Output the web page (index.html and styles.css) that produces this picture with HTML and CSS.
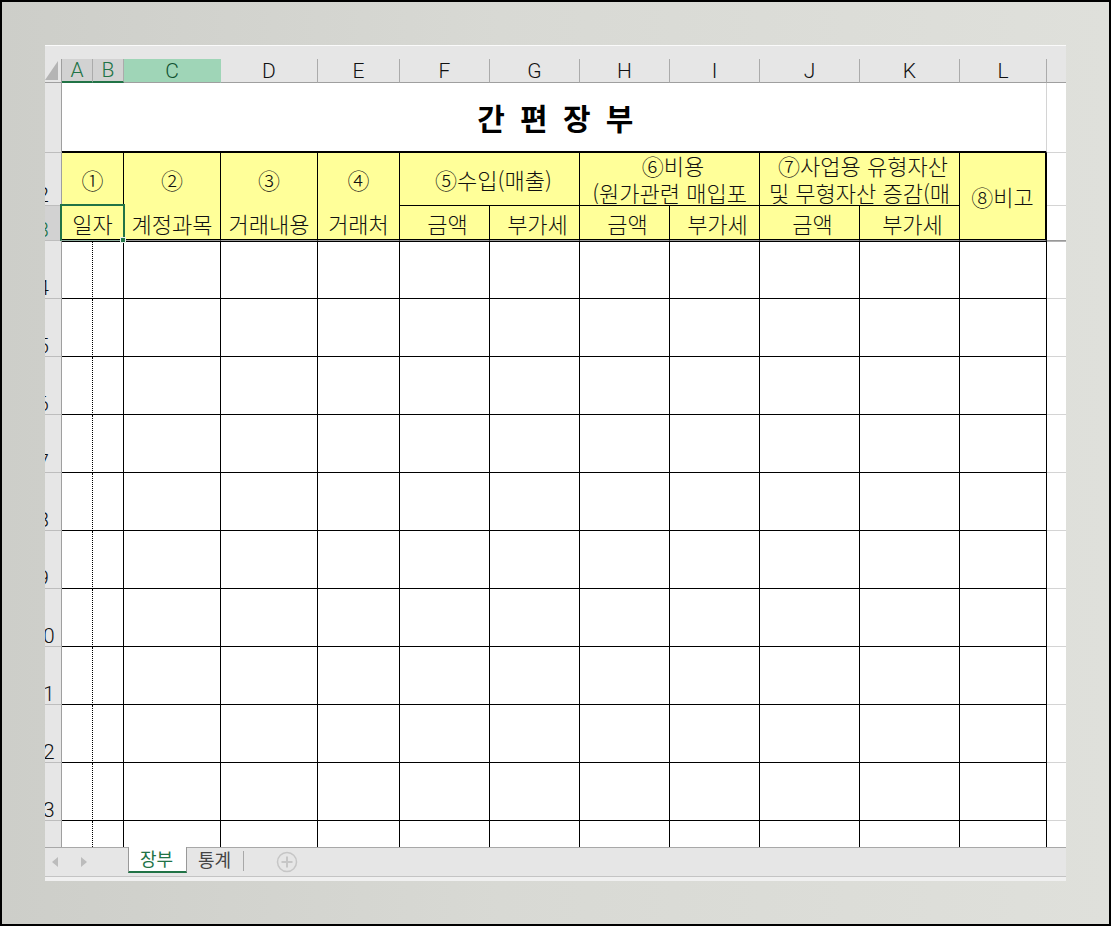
FILE: index.html

```html
<!DOCTYPE html>
<html lang="ko">
<head>
    <meta charset="UTF-8">
    <title>간편장부</title>
    <link rel="stylesheet" href="styles.css">
</head>
<body>
    <div class="frame">
        <div class="window">
            <div class="top-strip"></div>
            <div class="sheet">
                <table>
                    <colgroup>
                        <col class="w17"><col class="w31"><col class="w31"><col class="w97"><col class="w97"><col class="w82">
                        <col class="w90"><col class="w90"><col class="w90"><col class="w90">
                        <col class="w100"><col class="w100"><col class="w87"><col class="w19">
                    </colgroup>
                    <thead>
                        <tr class="letters">
                            <th class="corner"><svg width="13" height="19" viewBox="0 0 13 19"><polygon points="13,0 13,19 0,19" fill="#b4b4b4"/></svg></th>
                            <th class="sel-col">A</th><th class="sel-col">B</th><th class="cur-col">C</th>
                            <th>D</th><th>E</th><th>F</th><th>G</th><th>H</th><th>I</th><th>J</th><th>K</th><th>L</th><th class="no-sep"></th>
                        </tr>
                    </thead>
                    <tbody>
                        <tr class="r-title">
                            <th class="num"></th>
                            <td colspan="12" class="title">간 편 장 부</td>
                            <td class="out"></td>
                        </tr>
                        <tr class="r-head1">
                            <th class="num"><span>2</span></th>
                            <td colspan="2" class="y open">①</td>
                            <td class="y open">②</td>
                            <td class="y open">③</td>
                            <td class="y open">④</td>
                            <td colspan="2" class="y shift-more">⑤수입(매출)</td>
                            <td colspan="2" class="y two"><div class="clip"><span class="lead">⑥비용</span><br>(원가관련 매입포</div></td>
                            <td colspan="2" class="y two"><div class="clip"><span class="lead">⑦사업용 유형자산</span><br>및 무형자산 증감(매</div></td>
                            <td rowspan="2" class="y last">⑧비고</td>
                            <td class="out"></td>
                        </tr>
                        <tr class="r-head2">
                            <th class="num cur-row"><span>3</span></th>
                            <td colspan="2" class="y picked">일자<div class="selection"><div class="handle"></div></div></td>
                            <td class="y">계정과목</td>
                            <td class="y">거래내용</td>
                            <td class="y">거래처</td>
                            <td class="y shift">금액</td><td class="y shift">부가세</td>
                            <td class="y shift">금액</td><td class="y shift">부가세</td>
                            <td class="y shift">금액</td><td class="y shift">부가세</td>
                            <td class="out heavy"></td>
                        </tr>
                        <tr class="r-first"><th class="num"><span>4</span></th><td class="dot"></td><td></td><td></td><td></td><td></td><td></td><td></td><td></td><td></td><td></td><td></td><td></td><td class="out"></td></tr>
                        <tr class="r-data"><th class="num"><span>5</span></th><td class="dot"></td><td></td><td></td><td></td><td></td><td></td><td></td><td></td><td></td><td></td><td></td><td></td><td class="out"></td></tr>
                        <tr class="r-data"><th class="num"><span>6</span></th><td class="dot"></td><td></td><td></td><td></td><td></td><td></td><td></td><td></td><td></td><td></td><td></td><td></td><td class="out"></td></tr>
                        <tr class="r-data"><th class="num"><span>7</span></th><td class="dot"></td><td></td><td></td><td></td><td></td><td></td><td></td><td></td><td></td><td></td><td></td><td></td><td class="out"></td></tr>
                        <tr class="r-data"><th class="num"><span>8</span></th><td class="dot"></td><td></td><td></td><td></td><td></td><td></td><td></td><td></td><td></td><td></td><td></td><td></td><td class="out"></td></tr>
                        <tr class="r-data"><th class="num"><span>9</span></th><td class="dot"></td><td></td><td></td><td></td><td></td><td></td><td></td><td></td><td></td><td></td><td></td><td></td><td class="out"></td></tr>
                        <tr class="r-data"><th class="num"><span>10</span></th><td class="dot"></td><td></td><td></td><td></td><td></td><td></td><td></td><td></td><td></td><td></td><td></td><td></td><td class="out"></td></tr>
                        <tr class="r-data"><th class="num"><span>11</span></th><td class="dot"></td><td></td><td></td><td></td><td></td><td></td><td></td><td></td><td></td><td></td><td></td><td></td><td class="out"></td></tr>
                        <tr class="r-data"><th class="num"><span>12</span></th><td class="dot"></td><td></td><td></td><td></td><td></td><td></td><td></td><td></td><td></td><td></td><td></td><td></td><td class="out"></td></tr>
                        <tr class="r-data"><th class="num"><span>13</span></th><td class="dot"></td><td></td><td></td><td></td><td></td><td></td><td></td><td></td><td></td><td></td><td></td><td></td><td class="out"></td></tr>
                        <tr class="r-data"><th class="num"><span>14</span></th><td class="dot"></td><td></td><td></td><td></td><td></td><td></td><td></td><td></td><td></td><td></td><td></td><td></td><td class="out"></td></tr>
                    </tbody>
                </table>
            </div>
            <div class="tabbar">
                <div class="nav">
                    <svg width="6" height="10" viewBox="0 0 6 10"><polygon points="6,0 6,10 0,5" fill="#bcbcbc"/></svg>
                    <svg width="6" height="10" viewBox="0 0 6 10"><polygon points="0,0 0,10 6,5" fill="#bcbcbc"/></svg>
                </div>
                <div class="tab active">장부</div>
                <div class="tab">통계</div>
                <div class="tab-sep"></div>
                <svg class="add" width="22" height="22" viewBox="0 0 22 22">
                    <circle cx="11" cy="11" r="9.5" fill="none" stroke="#c6c6c6" stroke-width="1.5"/>
                    <path d="M11 5.5v11M5.5 11h11" stroke="#c6c6c6" stroke-width="2" fill="none"/>
                </svg>
            </div>
            <div class="bottom-strip"></div>
        </div>
    </div>
</body>
</html>
```

FILE: styles.css

```css
* {
    margin: 0;
    padding: 0;
    box-sizing: border-box;
}

body {
    width: 1111px;
    height: 926px;
    overflow: hidden;
    font-family: "Noto Sans CJK KR", "Liberation Sans", sans-serif;
}

.frame {
    width: 1111px;
    height: 926px;
    padding: 43px 0 0 43px;
    border: 2px solid #000;
    background: linear-gradient(90deg, #cdcec9, #d8d9d4 45%, #dfe0db);
}

.window {
    display: flex;
    flex-direction: column;
    width: 1021px;
    height: 836px;
    background: #e6e6e6;
}

.top-strip {
    height: 14px;
    border-top: 1px solid #fafafa;
}

.sheet {
    height: 788px;
    overflow: hidden;
}

table {
    width: 1021px;
    table-layout: fixed;
    border-collapse: separate;
    border-spacing: 0;
    background: #fff;
}

.w17 { width: 17px; }
.w19 { width: 19px; }
.w31 { width: 31px; }
.w82 { width: 82px; }
.w87 { width: 87px; }
.w90 { width: 90px; }
.w97 { width: 97px; }
.w100 { width: 100px; }

/* column letters */
.letters { height: 24px; }

.letters th {
    background: #e6e6e6;
    border-right: 1px solid #ababab;
    border-bottom: 1px solid #9f9f9f;
    font-family: Roboto, "Liberation Sans", sans-serif;
    font-size: 21px;
    font-weight: 300;
    color: #111;
    line-height: 20px;
}

.letters .corner {
    border-right: 1px solid #9f9f9f;
    padding: 2px 0 0 0;
    text-align: left;
    vertical-align: top;
    line-height: 0;
}

.letters .sel-col {
    background: #d2d2d2;
    color: #217346;
    border-bottom: 2px solid #217346;
}

.letters .cur-col {
    background: #9fd5b7;
    color: #0f5132;
    border-right-color: #9fd5b7;
}

.letters .no-sep { border-right: none; }

/* row numbers are cut off by the narrow header */
.num {
    overflow: hidden;
    background: #e6e6e6;
    border-right: 1px solid #9f9f9f;
    border-bottom: 1px solid #bdbdbd;
    vertical-align: bottom;
    font-family: Roboto, "Liberation Sans", sans-serif;
    font-size: 21px;
    font-weight: 300;
    color: #111;
    line-height: 20px;
}

.num span {
    display: block;
    width: 60px;
    margin-left: -32px;
    text-align: center;
}

.num.cur-row {
    background: #d2d2d2;
    color: #217346;
}

.r-title { height: 70px; }
.r-head1 { height: 53px; }
.r-head2 { height: 35px; }
.r-first { height: 58px; }
.r-data { height: 58px; }

td {
    border-right: 1px solid #000;
    border-bottom: 1px solid #000;
}

td.out {
    border-right: none;
    border-bottom: 1px solid #d4d4d4;
}

td.dot {
    border-right: 1px dotted #000;
}

.title {
    border-right-color: #d4d4d4;
    border-bottom-width: 2px;
    padding-left: 6px;
    text-align: center;
    font-size: 30px;
    font-weight: 700;
    letter-spacing: 3.4px;
    color: #000;
}

.y {
    background: #ffff99;
    text-align: center;
    white-space: nowrap;
    overflow: hidden;
    font-size: 22px;
    font-weight: 300;
    line-height: 27px;
    color: #111;
}

.y.open { border-bottom: none; }
.y.shift { padding-left: 6px; }
.y.shift-more { padding-left: 8px; }

.y.two { vertical-align: top; }

.clip {
    height: 52px;
    margin-top: -1px;
    overflow: hidden;
}

.lead { padding-left: 7px; }

/* header bottom edge: black, grey, then the black top of row 4 */
.r-head2 td,
.y.last {
    border-bottom: 1px solid #999;
    box-shadow: inset 0 -1px 0 #000;
}

.y.last { border-right-width: 2px; }

.r-head2 td.out { box-shadow: none; }

.r-first td { border-top: 1px solid #000; }
.r-first td.out { border-top: 1px solid #b4b4b4; }

.y.picked {
    position: relative;
    overflow: visible;
}

.selection {
    position: absolute;
    left: -2px;
    top: -2px;
    width: 65px;
    height: 37px;
    border: 2px solid #217346;
    border-bottom-width: 1px;
    border-bottom-color: #8fae9e;
}

.handle {
    position: absolute;
    right: -3px;
    bottom: -3px;
    width: 6px;
    height: 6px;
    background: #217346;
    border: 1px solid #e8efe9;
}

/* sheet tabs */
.tabbar {
    display: flex;
    align-items: stretch;
    height: 30px;
    border-top: 1px solid #a8a8a8;
    border-bottom: 1px solid #c4c4c4;
    background: #e6e6e6;
}

.nav {
    display: flex;
    align-items: center;
    gap: 23px;
    width: 83px;
    padding: 0 0 0 7px;
}

.tab {
    width: 59px;
    height: 24px;
    padding-right: 4px;
    text-align: center;
    font-size: 18px;
    line-height: 22px;
    color: #444;
}

.tab.active {
    height: 26px;
    padding-right: 2px;
    background: #fff;
    border-left: 1px solid #999;
    border-right: 1px solid #999;
    border-bottom: 2px solid #217346;
    margin-top: -1px;
    color: #217346;
}

.tab-sep {
    width: 1px;
    height: 20px;
    margin: 3px 0 0 -3px;
    background: #a8a8a8;
}

.add {
    margin: 3px 0 0 32px;
}

.bottom-strip {
    height: 4px;
    background: #f0f0f0;
}
```
